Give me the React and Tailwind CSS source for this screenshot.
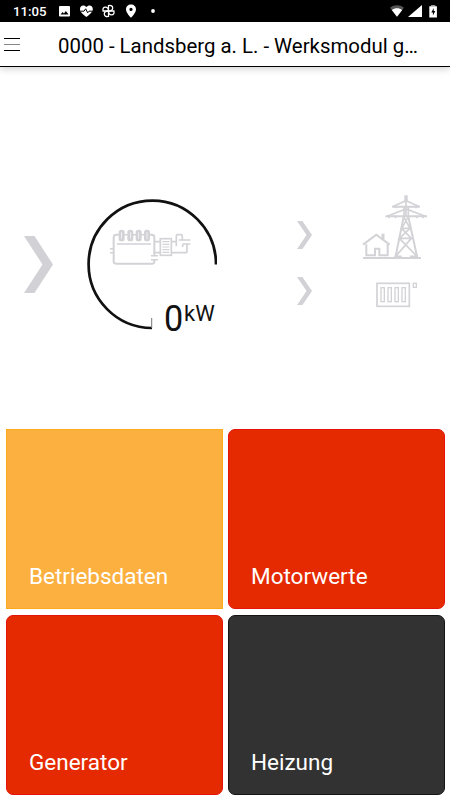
import React from 'react';

const tiles = [
    { label: 'Betriebsdaten', className: 'bg-[#fcb040] border-[#fdaa1c]' },
    { label: 'Motorwerte', className: 'bg-[#e52900] border-[#e61408] rounded-[7px]' },
    { label: 'Generator', className: 'bg-[#e52900] border-[#e61408] rounded-[7px]' },
    { label: 'Heizung', className: 'bg-[#323232] border-[#151515] rounded-[7px]' },
];

function StatusBar() {
    return (
        <div className="flex h-[22px] items-center bg-black pl-[13px] text-white">
            <span className="w-[46px] pt-[2px] text-[13.2px] leading-none font-medium">11:05</span>
            {/* Notification icons */}
            <svg width="100" height="22" viewBox="59 0 100 22" fill="#fff">
                <path fillRule="evenodd" d="M60 6h9a1 1 0 0 1 1 1v8.500a1 1 0 0 1-1 1h-9a1 1 0 0 1-1-1V7a1 1 0 0 1 1-1zM60.500 14.500h8l-2.600-3.500-2 2.500-1.200-1.400z" />
                <path d="M86.400 17C81.500 13 80 11.300 80 8.900 80 6.800 81.400 5.500 83.300 5.500c1.200 0 2.300.6 3.100 1.500.8-.9 1.900-1.500 3.100-1.500 1.900 0 3.300 1.300 3.300 3.400 0 2.400-1.500 4.100-6.400 8.100z" />
                <path d="M80.500 11.200h3.500l1.700-2.400 2 4 1.300-1.600h3.500" fill="none" stroke="#000" strokeWidth="1" />
                <g fill="none" stroke="#fff" strokeWidth="1.300">
                    <path d="M108.500 11V5.600c2.600-.6 4.200.5 4.200 2.400 0 1.700-1.700 3-4.200 3z" />
                    <path d="M108.500 11h5.400c.6 2.500-.5 3.900-2.200 3.900s-3.200-1.500-3.200-3.900z" />
                    <path d="M108.500 11v5.400c-2.600.5-4.200-.5-4.200-2.400 0-1.700 1.700-3 4.200-3z" />
                    <path d="M108.500 11h-5.400c-.6-2.500.5-3.900 2.200-3.900s3.200 1.500 3.200 3.900z" />
                </g>
                <path fillRule="evenodd" d="M131 4.500c2.900 0 5 2.100 5 4.900 0 3.300-5 8.300-5 8.300s-5-5-5-8.300c0-2.800 2.100-4.900 5-4.900zm0 3.300a1.600 1.600 0 1 0 0 3.200 1.600 1.600 0 0 0 0-3.200z" />
                <circle cx="153" cy="11" r="1.900" />
            </svg>
            {/* Wifi, signal, battery */}
            <svg className="mr-[11px] ml-auto" width="50" height="22" viewBox="389 0 50 22" fill="#fff">
                <path d="M390 7.800c4-3.300 10-3.300 14 0l-7 8.900z" fill="#555" />
                <path d="M391.800 10c3-2.200 7.400-2.200 10.400 0l-5.200 6.700z" />
                <path d="M408 16.900h14V5z" />
                <path d="M431 5h4.300v1.200H431z" fill="#999" />
                <path fillRule="evenodd" d="M429.300 6.200h7.600v11.200h-7.600zM433.700 8l-2.400 4.400h1.600v3.200l2.400-4.600h-1.600z" />
            </svg>
        </div>
    );
}

function Header() {
    return (
        <header className="relative z-10 flex h-[45px] items-center border-b border-black bg-white shadow-[0_2px_7px_rgba(0,0,0,0.18)]">
            <button type="button" aria-label="Menü" className="ml-1 flex w-[54px] flex-col gap-[5px]">
                <span className="h-px w-4 bg-black" />
                <span className="h-px w-4 bg-[#888]" />
                <span className="h-px w-4 bg-black" />
            </button>
            <h1 className="w-[370px] truncate pt-[3px] text-[20.4px] leading-6">0000 - Landsberg a. L. - Werksmodul g…</h1>
        </header>
    );
}

function Arrow({ className }) {
    return (
        <svg className={className} viewBox="0 0 29 57" preserveAspectRatio="none">
            <path d="M0 0h10.500L29 28.500 10.500 57H0l18.500-28.500z" fill="#d2d2d6" />
        </svg>
    );
}

function EngineIcon() {
    return (
        <svg className="absolute top-[21px] left-[13px]" width="100" height="55" viewBox="0 0 300 165" fill="none" stroke="#d2d2d7" strokeWidth="6">
            <path d="M57 44H48Q41 44 41 53V124Q41 131 48 131H157Q163 131 163 124V119M163 107V52Q163 44 156 44H150" />
            <path d="M73 44h10M99 44h9M124 44h9M30 86h11M30 98h11M153 107h21M153 119h21" strokeWidth="4.500" />
            <path d="M51 72h102" strokeWidth="4.500" />
            <g strokeWidth="8">
                <rect x="60" y="33" width="10" height="27" rx="4" />
                <rect x="86" y="33" width="10" height="27" rx="4" />
                <rect x="111" y="33" width="10" height="27" rx="4" />
                <rect x="136" y="33" width="10" height="27" rx="4" />
            </g>
            <path d="M163 65h18M163 98h18" strokeWidth="5" />
            <rect x="181" y="56" width="33" height="50" strokeWidth="5" />
            <path d="M187 65h21M187 73h21M187 81h21M187 89h21M187 97h21" strokeWidth="3.500" />
            <path d="M214 65h15M229 79V47Q229 44 232 44H243Q247 44 247 48V59M236 60h35M248 72h23M248 72v9M214 98h45Q261 98 261 94V72" strokeWidth="5" />
        </svg>
    );
}

function Gauge() {
    return (
        <div className="relative mt-[132px] ml-[34px] h-[140px] w-[135px]">
            <svg width="130" height="131" viewBox="87 199 130 131" fill="none">
                <path d="M216 264.500A63.700 63.700 0 1 0 152 328" stroke="#111" strokeWidth="2.700" />
                <path d="M151.700 318v10" stroke="#777" strokeWidth="1" />
            </svg>
            <EngineIcon />
            <div className="absolute top-[102px] left-[77px] flex items-start text-[#111]">
                <span className="w-5 origin-left scale-x-95 text-[36px] leading-[36px]">0</span>
                <span className="pt-px text-[22px] leading-[24px]">kW</span>
            </div>
        </div>
    );
}

function Consumers() {
    return (
        <svg className="mt-[118px] ml-[38px]" width="90" height="130" viewBox="0 0 270 390" fill="none" stroke="#d2d2d7" strokeWidth="6">
            <path d="M39 219h174" />
            {/* House */}
            <path d="M39 179l40-30 40 30M49 178v33h26v-20h13v20h25v-33" />
            <path d="M99 146v17" strokeWidth="9" />
            {/* Pylon */}
            <path d="M168 32v62M127 65l41-18 41 18M107 95l61-23 62 23" strokeWidth="5" />
            <path d="M127 65h82M107 94h124" strokeWidth="6" />
            <path d="M168 31v20" strokeWidth="10" />
            <path d="M162 65v30M175 65v30" strokeWidth="5" />
            <path d="M117 94v6M136 94v6M200 94v6M219 94v6M138 65v5M198 65v5" strokeWidth="5" />
            <path d="M161 95l-24 119M175 95l26 119" strokeWidth="6" />
            <path d="M161 95l19 35h-25l20-35M155 130l29 30h-36l32-30M148 160l53 54M184 160l-47 54M133 214h22M180 214h24" strokeWidth="5" />
            {/* Radiator */}
            <rect x="81" y="295" width="97" height="69" strokeWidth="5" />
            <g strokeWidth="4">
                <rect x="93" y="308" width="10" height="42" />
                <rect x="114" y="308" width="10" height="42" />
                <rect x="135" y="308" width="10" height="42" />
                <rect x="156" y="308" width="10" height="42" />
                <rect x="190" y="295" width="9" height="12" />
            </g>
        </svg>
    );
}

function App() {
    return (
        <div className="flex h-[800px] w-[450px] flex-col overflow-hidden bg-white font-['Roboto',sans-serif] text-black">
            <StatusBar />
            <Header />
            <section className="flex h-[362px] shrink-0 items-start">
                <Arrow className="mt-[169px] ml-6 h-[57px] w-[29px]" />
                <Gauge />
                <div className="mt-[154px] ml-[75px] flex flex-col gap-7">
                    <Arrow className="h-7 w-[15px]" />
                    <Arrow className="h-7 w-[15px]" />
                </div>
                <Consumers />
            </section>
            <main className="grid grid-cols-[217px_217px] grid-rows-[180px_180px] gap-x-[5px] gap-y-[6px] pl-[6px]">
                {tiles.map((tile) => (
                    <div key={tile.label} className={`flex items-end border px-[22px] pb-[19px] ${tile.className}`}>
                        <span className="text-[22.500px] leading-[26px] text-white">{tile.label}</span>
                    </div>
                ))}
            </main>
        </div>
    );
}

export default App;
